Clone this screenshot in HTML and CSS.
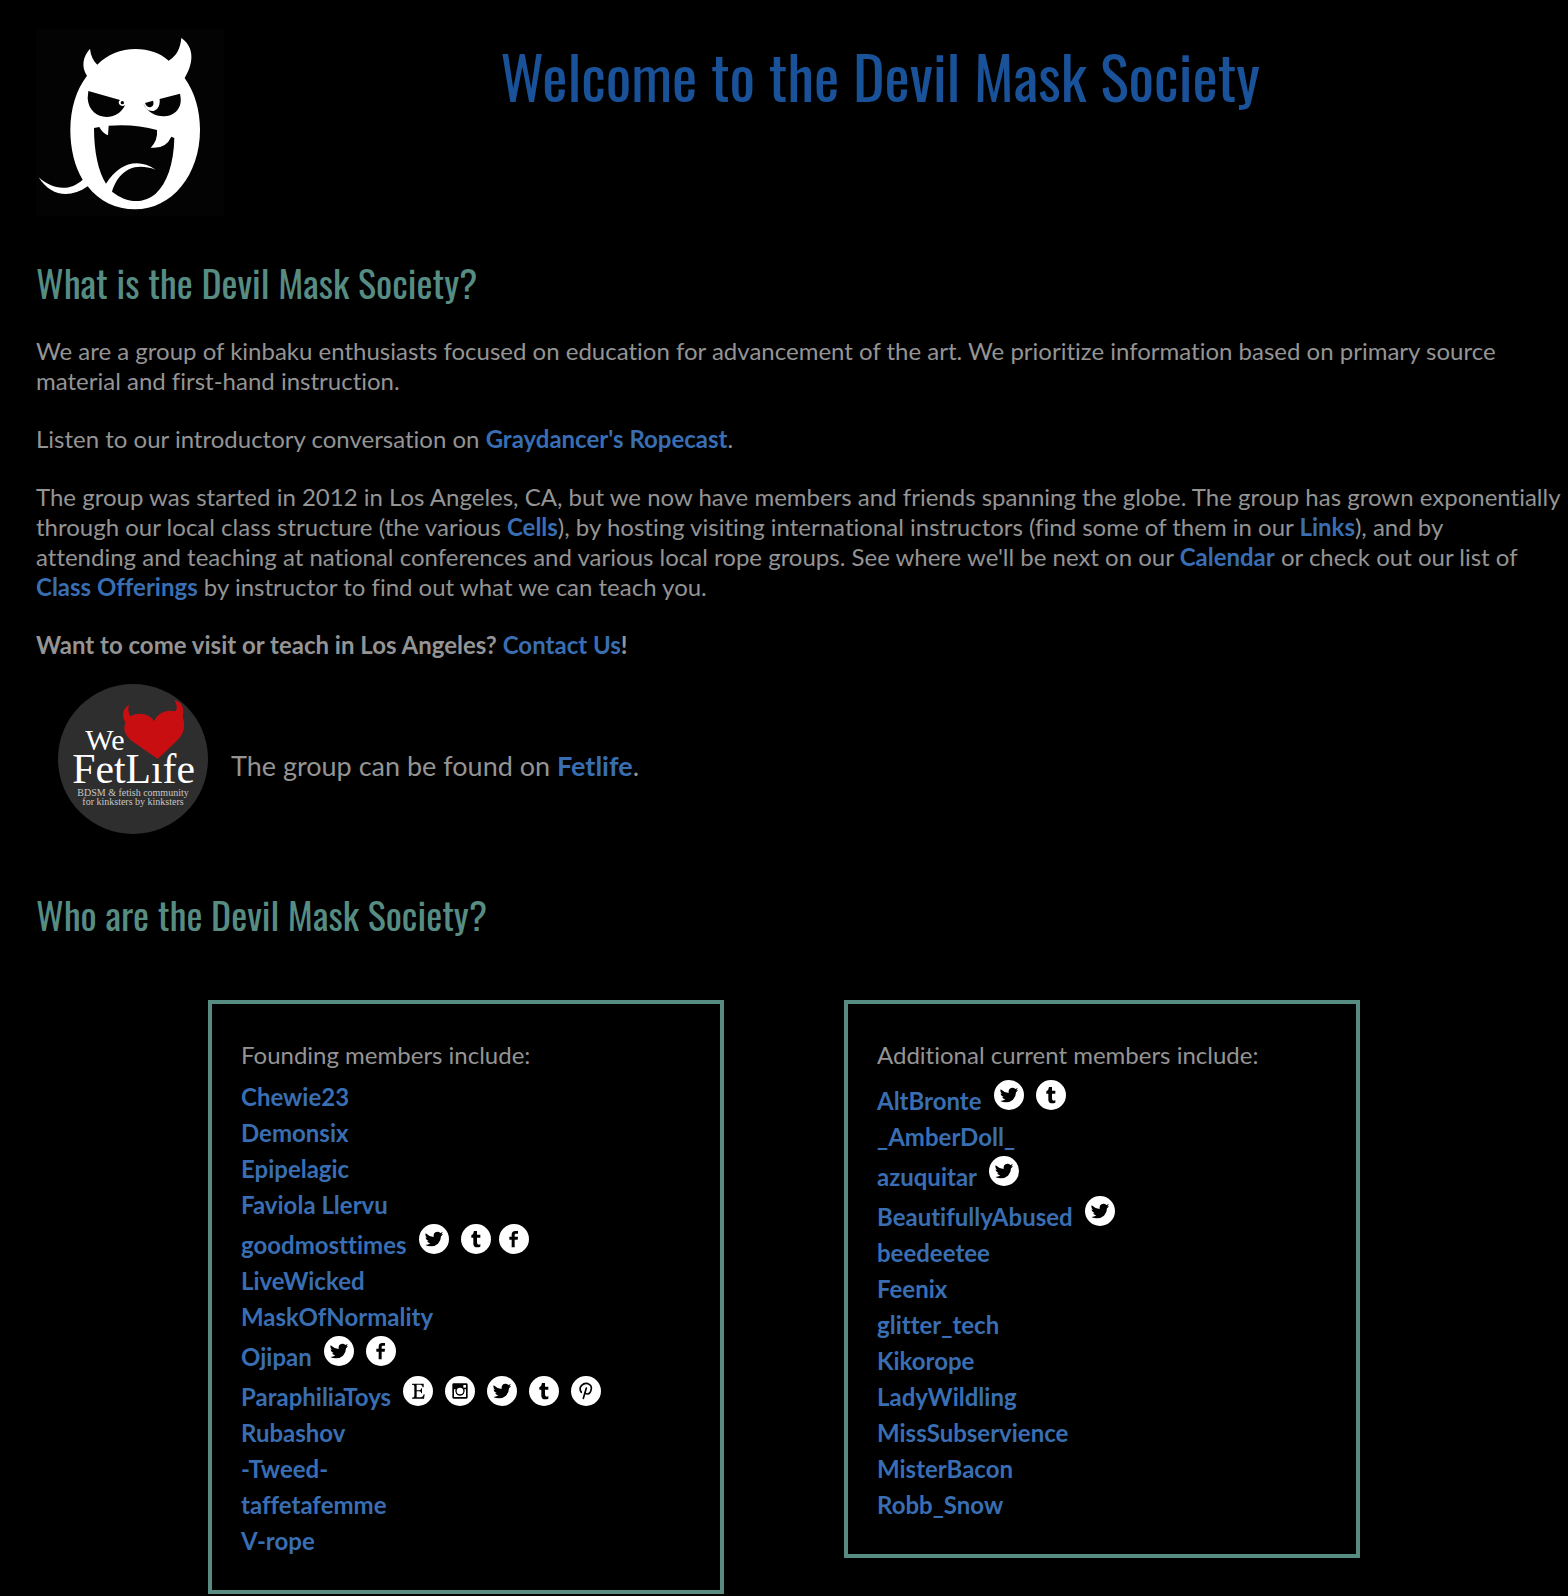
FILE: index.html
```html
<!DOCTYPE html>
<html lang="en">
<head>
<meta charset="utf-8">
<meta name="viewport" content="width=device-width, initial-scale=1">
<title>Devil Mask Society</title>
<link rel="stylesheet" href="styles.css">
</head>
<body>
<svg class="sprite" aria-hidden="true">
  <symbol id="twitter" viewBox="0 0 90 90">
    <circle cx="45" cy="45" r="45" fill="#fff"/>
    <path fill="#000" d="M20 28Q30 38 44 39Q42 24 55 23Q61 23 64 27Q68 26 71 24Q70 29 66 31Q69 31 72 30Q70 34 66 37Q66 50 57 59Q48 67 36 67Q26 67 19 63Q28 63 34 58Q26 57 24 51Q27 52 29 51Q20 48 20 40Q23 42 25 42Q17 36 20 28Z"/>
  </symbol>
  <symbol id="tumblr" viewBox="0 0 90 90">
    <circle cx="45" cy="45" r="45" fill="#fff"/>
    <path fill="#000" d="M39 21H48V32H58V41H48V55Q48 62 53 62Q56 62 58 60V68Q54 70 49 70Q37 70 37 59V41H31V34Q38 31 39 21Z"/>
  </symbol>
  <symbol id="facebook" viewBox="0 0 90 90">
    <circle cx="45" cy="45" r="45" fill="#fff"/>
    <path fill="#000" d="M38 70V47H31V38H38V32Q38 21 49 21H57V29H51Q47 29 47 33V38H57L56 47H47V70Z"/>
  </symbol>
  <symbol id="instagram" viewBox="0 0 90 90">
    <circle cx="45" cy="45" r="45" fill="#fff"/>
    <rect x="22" y="22" width="46" height="46" rx="4" fill="#000"/>
    <path fill="#fff" d="M27 40H32A14 14 0 1 0 58 40H63V63H27Z"/>
    <circle cx="45" cy="45" r="13" fill="#000"/>
    <circle cx="45" cy="45" r="10" fill="#fff"/>
    <rect x="55" y="27" width="8" height="8" fill="#fff"/>
  </symbol>
  <symbol id="pinterest" viewBox="0 0 90 90">
    <circle cx="45" cy="45" r="45" fill="#fff"/>
    <path fill="none" stroke="#000" stroke-width="5" stroke-linecap="round" d="M31 49Q23 37 32 28Q40 20 51 23Q62 27 61 38Q59 54 49 54Q44 54 42 50M46 36L37 67"/>
  </symbol>
  <symbol id="etsy" viewBox="0 0 90 90">
    <circle cx="45" cy="45" r="45" fill="#fff"/>
    <path fill="#000" d="M27 23H62V34H59Q58 26 53 26H41V43H49Q54 43 55 37H57V52H55Q54 46 49 46H41V64H53Q60 64 62 55H65L63 68H27V65Q34 65 34 61V30Q34 26 27 26Z"/>
  </symbol>
</svg>

<header class="masthead">
  <svg class="mask" viewBox="48 45 564 558" role="img" aria-label="Devil mask">
    <rect x="48" y="45" width="564" height="558" fill="#030303"/>
    <path fill="#fff" d="M210 101C212 122 220 138 232 149C262 119 302 102 347 102C386 102 420 114 446 137C470 123 481 100 484 69C516 91 528 132 494 189C524 231 540 285 540 344C540 480 455 583 345 583C287 583 239 560 203 514C150 552 91 544 56 487C98 525 149 530 188 494C164 454 151 402 151 344C151 281 169 223 201 182C182 153 190 124 210 101Z"/>
    <path fill="#030303" d="M205 228L300 255Q292 263 300 270Q309 276 316 269C292 323 207 318 203 250ZM480 236L419 252C423 294 382 301 370 265C394 323 488 315 482 249Z"/>
    <path fill="#030303" d="M375 264L399 257Q405 273 390 277Q380 277 375 264Z"/>
    <circle cx="307" cy="263" r="5" fill="#030303"/>
    <path fill="#030303" d="M222 339L238 336Q247 354 264 361L266 332Q345 326 411 345Q414 376 392 398Q437 403 454 365L463 369C461 448 441 504 407 536C367 569 318 563 276 530C289 487 325 434 407 464C351 426 296 447 258 506C234 469 222 408 222 339Z"/>
  </svg>
  <h1 class="title">Welcome to the Devil Mask Society</h1>
</header>

<main>
  <section class="about">
    <h2 class="heading">What is the Devil Mask Society?</h2>
    <p>We are a group of kinbaku enthusiasts focused on education for advancement of the art. We prioritize information based on primary source material and first-hand instruction.</p>
    <p>Listen to our introductory conversation on <a href="#">Graydancer's Ropecast</a>.</p>
    <p>The group was started in 2012 in Los Angeles, CA, but we now have members and friends spanning the globe. The group has grown exponentially<br>through our local class structure (the various <a href="#">Cells</a>), by hosting visiting international instructors (find some of them in our <a href="#">Links</a>), and by<br>attending and teaching at national conferences and various local rope groups. See where we'll be next on our <a href="#">Calendar</a> or check out our list of<br><a href="#">Class Offerings</a> by instructor to find out what we can teach you.</p>
    <p class="visit"><strong>Want to come visit or teach in Los Angeles? <a href="#">Contact Us</a>!</strong></p>
    <div class="fetlife">
      <svg class="badge" viewBox="24 27 450 450" role="img" aria-label="We love FetLife">
        <circle cx="249" cy="252" r="225" fill="#2e2e2e"/>
        <g class="badge-text">
          <text x="106" y="226" font-size="90">We</text>
          <text x="67" y="325" font-size="125">FetLıfe</text>
          <text x="249" y="364" font-size="30" text-anchor="middle" class="small">BDSM &amp; fetish community</text>
          <text x="249" y="391" font-size="30" text-anchor="middle" class="small">for kinksters by kinksters</text>
        </g>
        <path fill="#c90e12" d="M237 90Q231 111 242 124C268 109 300 118 312 139C323 113 350 102 377 109Q385 94 373 75Q407 84 398 126C407 151 402 176 383 195L323 252L250 201C223 182 219 162 226 143Q208 107 237 90Z"/>
      </svg>
      <p class="fetlife-text">The group can be found on <a href="#">Fetlife</a>.</p>
    </div>
  </section>

  <section>
    <h2 class="heading">Who are the Devil Mask Society?</h2>
    <div class="members">
      <div class="card">
        <p class="card-title">Founding members include:</p>
        <ul class="list">
          <li><a href="#">Chewie23</a></li>
          <li><a href="#">Demonsix</a></li>
          <li><a href="#">Epipelagic</a></li>
          <li><a href="#">Faviola Llervu</a></li>
          <li><a href="#">goodmosttimes</a><a class="social" href="#" aria-label="Twitter"><svg><use href="#twitter"/></svg></a><a class="social" href="#" aria-label="Tumblr"><svg><use href="#tumblr"/></svg></a><a class="social near" href="#" aria-label="Facebook"><svg><use href="#facebook"/></svg></a></li>
          <li><a href="#">LiveWicked</a></li>
          <li><a href="#">MaskOfNormality</a></li>
          <li><a href="#">Ojipan</a><a class="social" href="#" aria-label="Twitter"><svg><use href="#twitter"/></svg></a><a class="social" href="#" aria-label="Facebook"><svg><use href="#facebook"/></svg></a></li>
          <li><a href="#">ParaphiliaToys</a><a class="social" href="#" aria-label="Etsy"><svg><use href="#etsy"/></svg></a><a class="social" href="#" aria-label="Instagram"><svg><use href="#instagram"/></svg></a><a class="social" href="#" aria-label="Twitter"><svg><use href="#twitter"/></svg></a><a class="social" href="#" aria-label="Tumblr"><svg><use href="#tumblr"/></svg></a><a class="social" href="#" aria-label="Pinterest"><svg><use href="#pinterest"/></svg></a></li>
          <li><a href="#">Rubashov</a></li>
          <li><a href="#">-Tweed-</a></li>
          <li><a href="#">taffetafemme</a></li>
          <li><a href="#">V-rope</a></li>
        </ul>
      </div>
      <div class="card">
        <p class="card-title">Additional current members include:</p>
        <ul class="list">
          <li><a href="#">AltBronte</a><a class="social" href="#" aria-label="Twitter"><svg><use href="#twitter"/></svg></a><a class="social" href="#" aria-label="Tumblr"><svg><use href="#tumblr"/></svg></a></li>
          <li><a href="#">_AmberDoll_</a></li>
          <li><a href="#">azuquitar</a><a class="social" href="#" aria-label="Twitter"><svg><use href="#twitter"/></svg></a></li>
          <li><a href="#">BeautifullyAbused</a><a class="social" href="#" aria-label="Twitter"><svg><use href="#twitter"/></svg></a></li>
          <li><a href="#">beedeetee</a></li>
          <li><a href="#">Feenix</a></li>
          <li><a href="#">glitter_tech</a></li>
          <li><a href="#">Kikorope</a></li>
          <li><a href="#">LadyWildling</a></li>
          <li><a href="#">MissSubservience</a></li>
          <li><a href="#">MisterBacon</a></li>
          <li><a href="#">Robb_Snow</a></li>
        </ul>
      </div>
    </div>
  </section>
</main>
</body>
</html>
```
FILE: styles.css
```css
* {
  box-sizing: border-box;
}

body {
  margin: 0;
  padding: 30px 0 2px 36px;
  background: #000;
  color: #949494;
  font: 24px/30px Lato, "Open Sans", sans-serif;
  font-variant-ligatures: no-common-ligatures;
}

a {
  color: #396eb3;
  font-weight: 700;
  text-decoration: none;
}

p {
  margin: 0 0 28px;
}

.sprite {
  position: absolute;
  width: 0;
  height: 0;
}

.masthead {
  display: flex;
  align-items: flex-start;
  padding-right: 32px;
}

.mask {
  flex: none;
  width: 188px;
  height: 186px;
}

.title {
  flex: 1;
  margin: 0;
  color: #1a5299;
  font: 400 60px/90px Oswald, "Liberation Sans Narrow", "Roboto Condensed", sans-serif;
  text-align: center;
}

.heading {
  margin: 0;
  color: #568c82;
  font: 400 38px/60px Oswald, "Liberation Sans Narrow", "Roboto Condensed", sans-serif;
}

.about {
  padding: 36px 0 50px;
}

.about .heading {
  margin-bottom: 24px;
}

.visit {
  margin-bottom: 24px;
}

.fetlife {
  display: flex;
  align-items: center;
  gap: 23px;
  padding: 0 22px;
}

.badge {
  flex: none;
  width: 150px;
  height: 150px;
}

.badge-text {
  fill: #fff;
  font-family: "Liberation Serif", serif;
}

.badge-text .small {
  fill: #c8c8c8;
}

.fetlife-text {
  margin: 14px 0 0;
  font-size: 27px;
}

.members {
  display: flex;
  justify-content: center;
  align-items: flex-start;
  gap: 120px;
  margin: 56px 36px 0 0;
}

.card {
  flex: 0 1 516px;
  padding: 33px 29px 31px;
  border: 4px solid #568c82;
  line-height: 36px;
}

.card-title {
  margin: 0 0 6px;
}

.list {
  margin: 0;
  padding: 0;
  list-style: none;
}

.social {
  display: inline-block;
  height: 30px;
  margin: 1px 0 0 12px;
  vertical-align: baseline;
}

.social.near {
  margin-left: 8px;
}

.social svg {
  display: block;
  width: 30px;
  height: 30px;
}
```
